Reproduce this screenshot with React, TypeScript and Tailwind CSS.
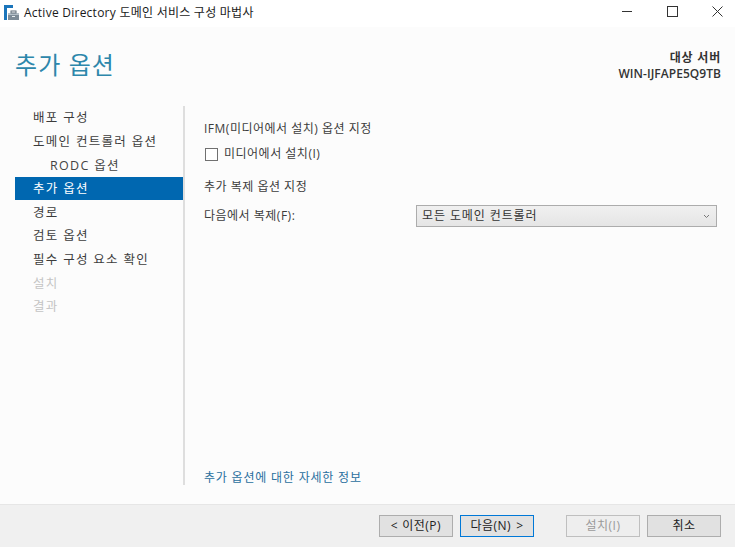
const navItems = [
  { label: '배포 구성', state: 'normal' },
  { label: '도메인 컨트롤러 옵션', state: 'normal' },
  { label: 'RODC 옵션', state: 'sub' },
  { label: '추가 옵션', state: 'active' },
  { label: '경로', state: 'normal' },
  { label: '검토 옵션', state: 'normal' },
  { label: '필수 구성 요소 확인', state: 'normal' },
  { label: '설치', state: 'disabled' },
  { label: '결과', state: 'disabled' },
]

function AppIcon() {
  return (
    <svg width="16" height="17" viewBox="0 0 16 17" className="shrink-0">
      <rect x="0" y="0" width="3" height="15" fill="#1b75bb" />
      <rect x="0" y="0" width="9" height="3" fill="#1b75bb" />
      <rect x="4" y="8" width="11" height="7" fill="#7d8b96" />
      <rect x="4" y="8" width="11" height="2" fill="#b5c0c8" />
      <rect x="7" y="6" width="5" height="2" fill="none" stroke="#5d6b76" strokeWidth="1" />
      <rect x="8" y="11" width="3" height="1" fill="#e8edf0" />
    </svg>
  )
}

export default function App() {
  return (
    <div
      className="w-[735px] h-[547px] flex flex-col bg-[#fcfcfc] text-[12px] text-[#3c3c3c] overflow-hidden tracking-[0.5px]"
      style={{ fontFamily: '"Open Sans", "Noto Sans CJK KR", sans-serif' }}
    >
      {/* 타이틀 바 */}
      <div className="h-[27px] shrink-0 bg-white flex items-center pl-[4px] text-[#1a1a1a]">
        <AppIcon />
        <span className="ml-[4px] text-[12px] leading-none -mt-[1px] tracking-[0.25px]">Active Directory 도메인 서비스 구성 마법사</span>
        <div className="ml-auto flex items-center gap-[34px] pr-[12px] -mt-[4px]">
          <svg width="11" height="11" viewBox="0 0 11 11"><path d="M0 5.5H10" stroke="#333" /></svg>
          <svg width="11" height="11" viewBox="0 0 11 11"><rect x="0.5" y="0.5" width="10" height="10" fill="none" stroke="#333" /></svg>
          <svg width="11" height="11" viewBox="0 0 11 11"><path d="M0.5 0.5L10.5 10.5M10.5 0.5L0.5 10.5" stroke="#333" /></svg>
        </div>
      </div>

      {/* 헤더 */}
      <div className="h-[79px] shrink-0 flex items-start justify-between pl-[15px] pr-[14px]">
        <h1 className="text-[24px] leading-[32px] mt-[22px] text-[#2d87ab] font-normal tracking-[1.1px]">추가 옵션</h1>
        <div className="text-right font-semibold text-[#333] text-[12px] leading-[16px] mt-[23px] tracking-[0.05px]">
          <div className="tracking-[0.8px]">대상 서버</div>
          <div>WIN-IJFAPE5Q9TB</div>
        </div>
      </div>

      {/* 본문 */}
      <div className="flex-1 flex pb-[19px] min-h-0">
        <nav className="w-[168px] ml-[15px] shrink-0 flex flex-col">
          {navItems.map(item => (
            <div
              key={item.label}
              className={`h-[23.6px] pt-[2px] flex items-center text-[12.5px] tracking-[1.3px] ${
                item.state === 'active' ? 'bg-[#0067b0] text-white pl-[18px]'
                : item.state === 'sub' ? 'pl-[35px] text-[#444] tracking-[0.4px]'
                : item.state === 'disabled' ? 'pl-[18px] text-[#c4c4c4]'
                : 'pl-[18px] text-[#3c3c3c]'
              }`}
            >
              {item.label}
            </div>
          ))}
        </nav>
        <div className="w-[2px] bg-[#dedede] shrink-0" />
        <main className="flex-1 flex flex-col pl-[19px] pr-[18px]">
          <p className="mt-[15px] leading-[16px]">IFM(미디어에서 설치) 옵션 지정</p>
          <label className="mt-[9px] flex items-center h-[16px]">
            <span className="w-[13px] h-[13px] ml-[1px] border border-[#707070] bg-white" />
            <span className="ml-[6px]">미디어에서 설치(I)</span>
          </label>
          <p className="mt-[17px] leading-[16px]">추가 복제 옵션 지정</p>
          <div className="mt-[10px] flex items-center justify-between">
            <span>다음에서 복제(F):</span>
            <div className="w-[301px] h-[22px] flex items-center justify-between pl-[5px] pr-[6px] border border-[#acacac] bg-gradient-to-b from-[#f0f0f0] to-[#e5e5e5]">
              <span className="text-[#333] tracking-[0.9px]">모든 도메인 컨트롤러</span>
              <svg width="7" height="5" viewBox="0 0 7 5"><path d="M1 1L3.5 3.5L6 1" fill="none" stroke="#777" /></svg>
            </div>
          </div>
          <a className="mt-auto text-[#2a6f9e] leading-[16px] -mb-[1px] tracking-[0.8px]">추가 옵션에 대한 자세한 정보</a>
        </main>
      </div>

      {/* 하단 버튼 */}
      <footer className="h-[43px] shrink-0 bg-[#f0f0f0] border-t border-[#e6e6e6] flex items-center pl-[379px]">
        <button className="w-[74px] h-[22px] border border-[#adadad] bg-[#e1e1e1] text-[#222] text-[12px] flex items-center justify-center gap-[4px]"><span>&lt;</span><span>이전(P)</span></button>
        <button className="ml-[7px] w-[74px] h-[22px] border border-[#0078d7] bg-[#e1e1e1] text-[#222] text-[12px] flex items-center justify-center gap-[5px]"><span>다음(N)</span><span>&gt;</span></button>
        <button className="ml-[32px] w-[74px] h-[22px] border border-[#bfbfbf] bg-[#eeeeee] text-[#9a9a9a] text-[12px] flex items-center justify-center">설치(I)</button>
        <button className="ml-[7px] w-[74px] h-[22px] border border-[#adadad] bg-[#e1e1e1] text-[#222] text-[12px] flex items-center justify-center">취소</button>
      </footer>
    </div>
  )
}
